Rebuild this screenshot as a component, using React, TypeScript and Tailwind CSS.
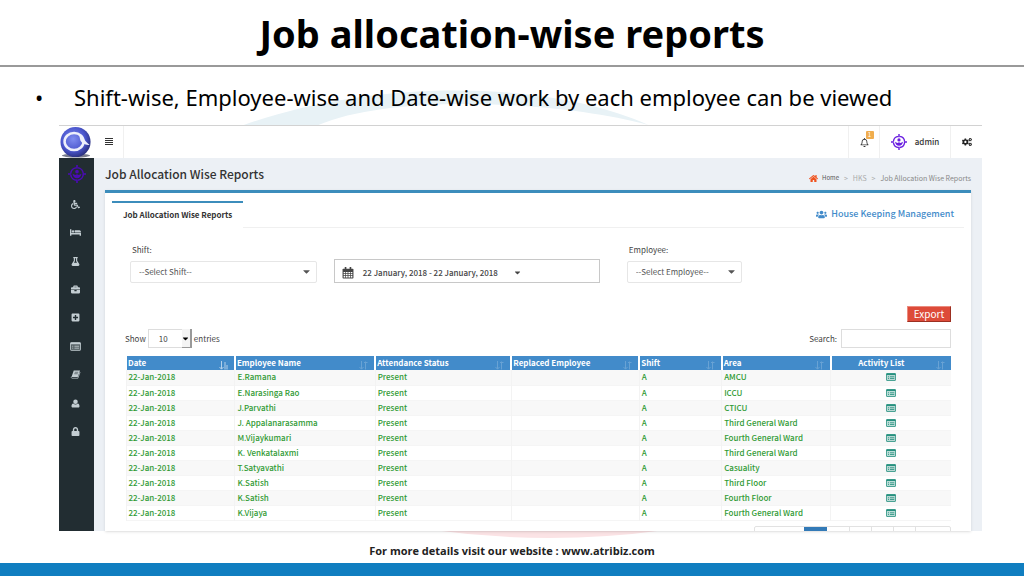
import type { ReactNode } from "react";
import {
  FaBriefcase,
  FaCaretDown,
  FaCogs,
  FaFlask,
  FaHome,
  FaLock,
  FaPlusSquare,
  FaRegBell,
  FaUsers,
  FaWheelchair,
} from "react-icons/fa";

const columns = [
  { name: "Date", width: "w-[13.2%]" },
  { name: "Employee Name", width: "w-[17%]" },
  { name: "Attendance Status", width: "w-[16.5%]" },
  { name: "Replaced Employee", width: "w-[15.5%]" },
  { name: "Shift", width: "w-[10%]" },
  { name: "Area", width: "w-[13.2%]" },
  { name: "Activity List", width: "w-[14.6%]" },
];

const rows = [
  ["E.Ramana", "AMCU"],
  ["E.Narasinga Rao", "ICCU"],
  ["J.Parvathi", "CTICU"],
  ["J. Appalanarasamma", "Third General Ward"],
  ["M.Vijaykumari", "Fourth General Ward"],
  ["K. Venkatalaxmi", "Third General Ward"],
  ["T.Satyavathi", "Casuality"],
  ["K.Satish", "Third Floor"],
  ["K.Satish", "Fourth Floor"],
  ["K.Vijaya", "Fourth General Ward"],
];

function BarsIcon({ className }: { className: string }) {
  return (
    <svg viewBox="0 0 8 8" className={className} fill="currentColor" shapeRendering="crispEdges" aria-hidden="true">
      <path d="M0 0h8v1H0zM0 2h8v1H0zM0 4h8v1H0zM0 6h8v1H0z" />
    </svg>
  );
}

function BedIcon({ className }: { className: string }) {
  return (
    <svg viewBox="0 0 20 16" className={className} fill="currentColor" aria-hidden="true">
      <path d="M0 2h2.500v7H20v5h-2.500v-2.500h-15V14H0z" />
      <circle cx="5.500" cy="6" r="2.200" />
      <path d="M8.500 4H17a3 3 0 0 1 3 3v1.200H8.500z" />
    </svg>
  );
}

function BookIcon({ className }: { className: string }) {
  return (
    <svg viewBox="0 0 20 18" className={className} aria-hidden="true">
      <path d="M6.500 1H19l-4.500 13H2z" fill="currentColor" />
      <path d="M2 13.500c-.8 1.500-.2 3 1.200 3H14.800L19.200 4" fill="none" stroke="currentColor" strokeWidth="1.400" />
      <path d="M8.500 4.500h7M7.500 7.500h7" stroke="#222d32" strokeWidth="1.100" />
    </svg>
  );
}

function PersonIcon({ className }: { className: string }) {
  return (
    <svg viewBox="0 0 18 18" className={className} fill="currentColor" aria-hidden="true">
      <circle cx="9" cy="5.500" r="4.500" />
      <path d="M4.500 9c1.300 1.200 2.800 1.800 4.500 1.800s3.200-.6 4.500-1.800c2.500.5 3.500 3 3.500 5.500 0 1.700-1 2.500-2.500 2.500h-11C2 17 1 16.200 1 14.500 1 12 2 9.500 4.500 9z" />
    </svg>
  );
}

function ListIcon({ className }: { className: string }) {
  return (
    <svg viewBox="0 0 20 16" className={className} fill="none" stroke="currentColor" aria-hidden="true">
      <rect x="1" y="1" width="18" height="14" rx="1" fill="currentColor" fillOpacity="0.3" strokeWidth="1.600" />
      <path d="M1 2.500h18" strokeWidth="3" />
      <path d="M4 7.500h2M8 7.500h8.500M4 11h2M8 11h8.500" strokeWidth="1.600" />
    </svg>
  );
}

function CalendarIcon({ className }: { className: string }) {
  return (
    <svg viewBox="0 0 22 22" className={className} aria-hidden="true">
      <rect x="1" y="3" width="20" height="18" rx="1.500" fill="currentColor" />
      <path d="M6.500 0v5M15.500 0v5" stroke="currentColor" strokeWidth="3" />
      <path
        d="M3 9h3v2.500H3zM7.300 9h3v2.500h-3zM11.700 9h3v2.500h-3zM16 9h3v2.500h-3zM3 12.800h3v2.500H3zM7.300 12.800h3v2.500h-3zM11.700 12.800h3v2.500h-3zM16 12.800h3v2.500h-3zM3 16.600h3v2.500H3zM7.300 16.600h3v2.500h-3zM11.700 16.600h3v2.500h-3zM16 16.600h3v2.500h-3z"
        fill="#ffffff"
      />
    </svg>
  );
}

const menu = [
  { label: "Patients", icon: FaWheelchair },
  { label: "Wards", icon: BedIcon },
  { label: "Laboratory", icon: FaFlask },
  { label: "Stores", icon: FaBriefcase },
  { label: "Pharmacy", icon: FaPlusSquare },
  { label: "Reports", icon: ListIcon },
  { label: "Records", icon: BookIcon },
  { label: "Staff", icon: PersonIcon },
  { label: "Security", icon: FaLock },
];

function Emblem({ className, color }: { className: string; color: string }) {
  return (
    <svg viewBox="0 0 20 20" className={className} fill="none" stroke={color} aria-hidden="true">
      <circle cx="10" cy="10" r="7" strokeWidth="1.700" strokeDasharray="9.500 1.500" />
      <path d="M10 0v4M10 16v4M0 10h3.500M16.500 10H20" strokeWidth="1.800" />
      <circle cx="10" cy="7.400" r="2" fill={color} stroke="none" />
      <path d="M5 9.600c.6 3 2.200 5 5 5s4.400-2 5-5l-3 1.500L10 10.300l-2 .8z" fill={color} stroke="none" />
    </svg>
  );
}

function Logo() {
  return (
    <svg viewBox="0 0 35 33" className="h-8 w-[35px] shrink-0" aria-hidden="true">
      <defs>
        <radialGradient id="ball" cx="42%" cy="40%" r="62%">
          <stop offset="0" stopColor="#7f8df0" />
          <stop offset="0.650" stopColor="#4a55cc" />
          <stop offset="1" stopColor="#2c327f" />
        </radialGradient>
      </defs>
      <ellipse cx="17" cy="30.500" rx="14.500" ry="2" fill="#777b8c" />
      <circle cx="16.500" cy="16.500" r="15.500" fill="url(#ball)" />
      <ellipse cx="15" cy="16" rx="9.800" ry="8.800" fill="none" stroke="#eef0fb" strokeWidth="2.600" />
      <path d="M20 8.500c4 2 5.500 6.500 11 11-4.500.5-8-1.500-9.500-4.500z" fill="#eef0fb" />
    </svg>
  );
}

function SortMark({ active }: { active: boolean }) {
  return (
    <svg
      viewBox="0 0 9 9"
      className={active ? "h-[9px] w-[9px] opacity-60" : "h-[9px] w-[9px] opacity-20"}
      fill="none"
      stroke="#ffffff"
      aria-hidden="true"
    >
      <path d="M2.500 0v8M.5 6l2 2.200 2-2.200" />
      <path d={active ? "M6 8.500V1M8 8.500V4" : "M6.500 8.500V.5M5 1.500h3.500"} />
    </svg>
  );
}

function Dropdown({ id, option }: { id: string; option: string }) {
  return (
    <div className="relative w-full">
      <select
        id={id}
        className="block h-[22px] w-full appearance-none rounded-[2px] border border-[#e6e6e6] bg-white pl-2 pr-5 text-[8px] leading-[12px] text-[#555]"
      >
        <option>{option}</option>
      </select>
      <FaCaretDown className="pointer-events-none absolute right-[6px] top-[5px] h-[11px] w-[9px] text-[#555]" />
    </div>
  );
}

function TopCell({ children, className }: { children: ReactNode; className: string }) {
  return (
    <div className={`flex h-full items-center justify-center border-l border-[#f0f0f0] ${className}`}>
      {children}
    </div>
  );
}

function TopBar() {
  return (
    <header className="flex h-[33px] items-center border-t border-[#d2d2d2] bg-white">
      <Logo />
      <button
        type="button"
        aria-label="Toggle menu"
        className="flex h-full w-[30px] items-center justify-center border-r border-[#f0f0f0] text-[#333]"
      >
        <BarsIcon className="h-[8px] w-[8px]" />
      </button>
      <div className="flex-1" />
      <TopCell className="w-[31px]">
        <button type="button" aria-label="Notifications" className="relative text-[#333]">
          <FaRegBell className="h-[9px] w-[9px]" />
          <span className="absolute -top-[7px] left-[6px] flex h-[8px] w-[8px] items-center justify-center rounded-[1px] bg-[#f0ad4e] text-[6px] leading-[8px] text-white">
            1
          </span>
        </button>
      </TopCell>
      <TopCell className="w-[71px] gap-2">
        <Emblem className="h-[16px] w-[16px]" color="#6a1fe0" />
        <span className="text-[8px] font-medium leading-[12px] text-[#333]">admin</span>
      </TopCell>
      <TopCell className="w-[32px]">
        <button type="button" aria-label="Settings" className="text-[#222]">
          <FaCogs className="h-[10px] w-[10px]" />
        </button>
      </TopCell>
    </header>
  );
}

function SideBar() {
  return (
    <nav className="w-[35px] shrink-0 bg-[#222d32]" aria-label="Main">
      <div className="flex h-8 items-center justify-center">
        <Emblem className="h-[18px] w-[18px]" color="#4b0bb5" />
      </div>
      <ul className="flex h-64 flex-col pr-[3px]">
        {menu.map(({ label, icon: Icon }) => (
          <li key={label} className="flex-1">
            <a href="#" aria-label={label} className="flex h-full items-center justify-center text-[#c3cdd2]">
              <Icon className="h-[9px] w-[11px]" />
            </a>
          </li>
        ))}
      </ul>
    </nav>
  );
}

function Filters() {
  return (
    <div className="flex items-end pl-[18px] text-[8px] leading-[12px] text-[#444]">
      <div className="w-[22.4%]">
        <label htmlFor="shift" className="mb-[5px] block pl-[2px]">
          Shift:
        </label>
        <Dropdown id="shift" option="--Select Shift--" />
      </div>
      <button
        type="button"
        className="ml-[17px] flex h-[24px] w-[31.9%] items-center border border-[#c8c8c8] bg-white px-[7px] pt-[3px] text-[8px] font-medium text-[#444]"
      >
        <CalendarIcon className="mr-[9px] h-[12px] w-[12px]" />
        <span>22 January, 2018 - 22 January, 2018</span>
        <FaCaretDown className="ml-4 h-[9px] w-[7px]" />
      </button>
      <div className="ml-[27px] w-[13.8%]">
        <label htmlFor="employee" className="mb-[5px] block pl-[2px]">
          Employee:
        </label>
        <Dropdown id="employee" option="--Select Employee--" />
      </div>
    </div>
  );
}

function ReportTable() {
  return (
    <table className="w-full table-fixed border-collapse text-left text-[8px] leading-[12px]">
      <thead>
        <tr className="bg-[#428bca] text-white">
          {columns.map(({ name, width }, i) => (
            <th
              key={name}
              scope="col"
              className={`relative h-[14px] whitespace-nowrap border-l-2 border-white py-0 font-bold ${width} ${i === 6 ? "pl-0 pr-5 text-center" : "px-px"}`}
            >
              {name}
              <span className="absolute bottom-0 right-[6px]">
                <SortMark active={i === 0} />
              </span>
            </th>
          ))}
        </tr>
      </thead>
      <tbody>
        {rows.map(([name, area], i) => (
          <tr key={i} className="h-[15px] border-b border-[#f5f5f5] font-medium text-[#2f9a33] odd:bg-[#f8f8f8]">
            {["22-Jan-2018", name, "Present", "", "A", area].map((cell, j) => (
              <td key={j} className="whitespace-nowrap border-l border-[#f3f3f3] px-[2px] py-0">
                {cell}
              </td>
            ))}
            <td className="border-l border-[#f3f3f3] p-0">
              <a href="#" aria-label={`Activities of ${name}`} className="flex justify-center text-[#26907f]">
                <ListIcon className="h-[8px] w-[10px]" />
              </a>
            </td>
          </tr>
        ))}
      </tbody>
    </table>
  );
}

function ReportPanel() {
  return (
    <section className="border-t-[3px] border-[#3c8dbc] bg-white px-[7px] shadow-sm">
      <div className="mt-2 flex items-stretch">
        <div className="border-t-2 border-[#3c8dbc] px-[11px] pb-[7px] pt-[6px] text-[8px] font-bold leading-[12px] text-[#333]">
          Job Allocation Wise Reports
        </div>
        <div className="flex flex-1 items-center justify-end border-b border-[#f0f0f0] pr-[10px]">
          <a href="#" className="flex items-center gap-1 text-[9px] font-medium leading-[12px] text-[#428bca]">
            <FaUsers className="h-[11px] w-[11px]" />
            House Keeping Management
          </a>
        </div>
      </div>
      <div className="pt-[16px]">
        <Filters />
      </div>
      <div className="px-[13px]">
        <div className="mt-[23px] flex justify-end">
          <button
            type="button"
            className="h-4 w-[44px] border border-b-[#9c2f21] border-l-[#eb8b7e] border-r-[#9c2f21] border-t-[#eb8b7e] bg-[#dd4b39] text-[10px] leading-[12px] text-white"
          >
            Export
          </button>
        </div>
        <div className="mb-2 mt-[7px] flex items-center justify-between text-[8px] leading-[12px] text-[#444]">
          <div className="flex items-center gap-[2px]">
            <label htmlFor="count">Show</label>
            <div className="relative">
              <select
                id="count"
                className="block h-[19px] w-[44px] appearance-none border border-[#ddd] bg-white pl-[10px] text-[8px] leading-[12px] text-[#444]"
              >
                <option>10</option>
              </select>
              <span className="pointer-events-none absolute right-0 top-0 flex h-[19px] w-[10px] items-center justify-center border-b border-r-2 border-[#999] bg-[#f4f4f4]">
                <FaCaretDown className="h-[9px] w-[7px] text-black" />
              </span>
            </div>
            <span>entries</span>
          </div>
          <div className="flex items-center gap-1">
            <label htmlFor="search">Search:</label>
            <input id="search" type="text" className="h-[19px] w-[110px] border border-[#ddd] bg-white px-1" />
          </div>
        </div>
        <ReportTable />
        <div className="mt-[5px] flex h-[5px] justify-end overflow-hidden">
          <div className="flex h-4 rounded-[2px] border border-[#e2e2e2]">
            <span className="w-[49px]" />
            <span className="w-[23px] bg-[#337ab7]" />
            <span className="w-[22px]" />
            <span className="w-[22px] border-l border-[#e2e2e2]" />
            <span className="w-[22px] border-l border-[#e2e2e2]" />
            <span className="w-[22px] border-l border-[#e2e2e2]" />
            <span className="w-[35px] border-l border-[#e2e2e2]" />
          </div>
        </div>
      </div>
    </section>
  );
}

export default function App() {
  return (
    <div className="relative isolate flex min-h-screen flex-col bg-white font-['Noto_Sans','Open_Sans',sans-serif] text-black">
      <svg
        viewBox="0 0 460 460"
        className="absolute left-[218px] top-[86px] -z-10 h-[460px] w-[660px]"
        preserveAspectRatio="none"
        aria-hidden="true"
      >
        <path d="M18 39C110-8 230-6 300 39C235 14 120 8 70 39Z" fill="#e8f2f6" />
        <path d="M150 444Q230 460 312 444Z" fill="#fbe3e5" />
      </svg>
      <h1 className="flex h-[67px] items-center justify-center border-b-2 border-[#999] text-[38px] font-bold leading-[44px]">
        Job allocation-wise reports
      </h1>
      <ul className="flex h-[58px] items-center pl-[35px] pt-px text-[22px] leading-[28px]">
        <li className="flex">
          <span className="w-[39px]">•</span>
          Shift-wise, Employee-wise and Date-wise work by each employee can be viewed
        </li>
      </ul>
      <main className="ml-[59px] mr-[42px] font-['Noto_Sans_CJK_SC',sans-serif]">
        <TopBar />
        <div className="flex">
          <SideBar />
          <div className="min-w-0 flex-1 bg-[#ecf0f5] px-[11px]">
            <div className="flex h-8 items-center justify-between">
              <h2 className="text-[12px] font-medium leading-[16px] text-[#333]">Job Allocation Wise Reports</h2>
              <nav
                aria-label="Breadcrumb"
                className="flex items-center gap-[5px] pt-2 text-[7px] leading-[10px] text-[#aaa]"
              >
                <a href="#" className="flex items-center gap-1 text-[6px] text-[#555]">
                  <FaHome className="h-[9px] w-[9px] text-[#f0521e]" />
                  Home
                </a>
                <span>&gt;</span>
                <a href="#">HKS</a>
                <span>&gt;</span>
                <span className="text-[#888]">Job Allocation Wise Reports</span>
              </nav>
            </div>
            <ReportPanel />
          </div>
        </div>
      </main>
      <footer className="mt-auto">
        <p className="pb-[3px] text-center font-['Open_Sans',sans-serif] text-[11px] font-bold leading-[18px] text-[#222]">
          For more details visit our website : www.atribiz.com
        </p>
        <div className="h-[13px] bg-[#107ec0]" />
      </footer>
    </div>
  );
}
